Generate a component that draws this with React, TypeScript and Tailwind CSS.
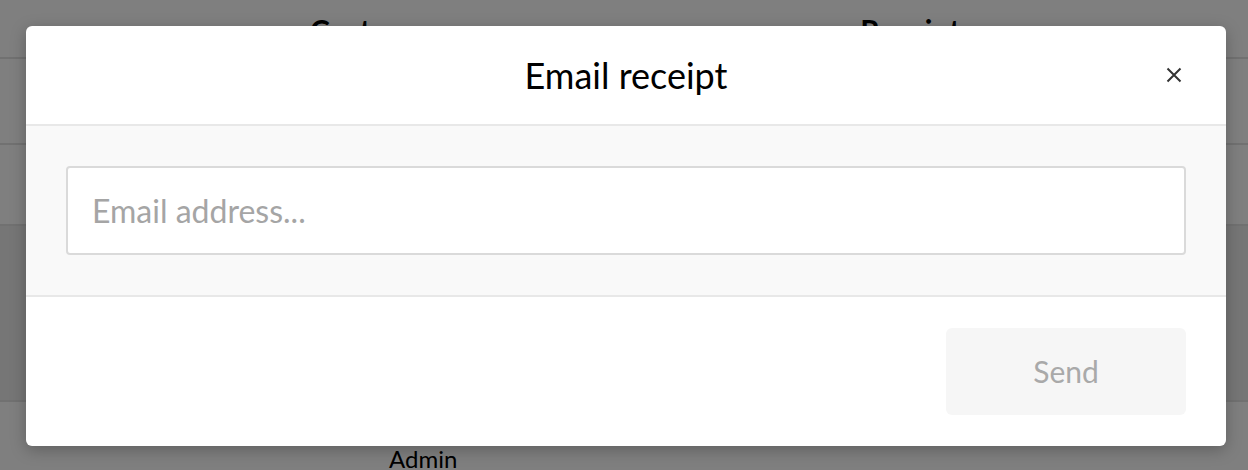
import React from "react";

const rows = [
  { h: "h-[86px]", bg: "bg-white" },
  { h: "h-[81px]", bg: "bg-[#ffffff]" },
  { h: "h-[176px]", bg: "bg-[#ededed]" },
];

export default function App() {
  return (
    <div
      className="relative h-[470px] w-[1248px] overflow-hidden bg-white text-black"
      style={{ fontFamily: "Lato, 'Open Sans', sans-serif" }}
    >
      {/* page behind the dialog */}
      <div className="flex h-[59px] border-b-2 border-[#e2e2e2] text-[30px] font-bold">
        <div className="pl-[310px] pt-[8px]">Customer</div>
        <div className="pl-[420px] pt-[8px]">Receipt</div>
      </div>
      {rows.map((r, i) => (
        <div key={i} className={`${r.h} ${r.bg} border-b-2 border-[#e2e2e2]`} />
      ))}
      <div className="pl-[389px] pt-[42px] text-[24px] leading-tight">Admin</div>

      {/* backdrop */}
      <div className="absolute inset-0 bg-black/50" />

      {/* dialog */}
      <div className="absolute left-[26px] top-[26px] w-[1200px] overflow-hidden rounded-md bg-white shadow-[0_4px_16px_rgba(0,0,0,0.25)]">
        <div className="relative flex h-[100px] items-center justify-center border-b-2 border-[#e8e8e8]">
          <h2 className="text-[36px] leading-none text-black">Email receipt</h2>
          <button className="absolute right-[43px] top-[40px] flex h-[18px] w-[18px] items-center justify-center text-[#333]">
            <svg width="16" height="16" viewBox="0 0 16 16" fill="none" stroke="currentColor" strokeWidth="2">
              <path d="M1.5 1.5l13 13M14.5 1.5l-13 13" />
            </svg>
          </button>
        </div>
        <div className="border-b-2 border-[#e8e8e8] bg-[#f9f9f9] px-[40px] pt-[40px] pb-[40px]">
          <input
            type="email"
            placeholder="Email address..."
            className="h-[89px] w-full rounded border-2 border-[#dadada] bg-white px-[24px] text-[32px] text-black outline-none placeholder:text-[#a5a5a5]"
          />
        </div>
        <div className="flex justify-end px-[40px] pt-[31px] pb-[31px]">
          <button
            disabled
            className="h-[87px] w-[240px] rounded-md bg-[#f6f6f6] text-[30px] text-[#a9a9a9]"
          >
            Send
          </button>
        </div>
      </div>
    </div>
  );
}
